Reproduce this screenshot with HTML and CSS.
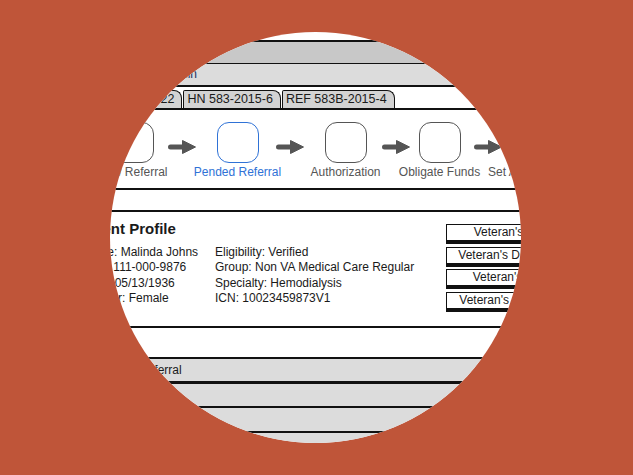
FILE: index.html
```html
<!DOCTYPE html>
<html lang="en">
<head>
<meta charset="utf-8">
<title>Referral wireframe</title>
<link rel="stylesheet" href="styles.css">
</head>
<body>
<div class="stage">
  <div class="lens">
    <div class="screen">
      <div class="masthead"></div>
      <div class="band band-dark"></div>
      <div class="band band-user"><span class="user">Welcome, Admin</span></div>
      <div class="tabs">
        <div class="tab">CR 583-2015-22</div>
        <div class="tab">HN 583-2015-6</div>
        <div class="tab">REF 583B-2015-4</div>
      </div>
      <div class="flow">
        <div class="step"><div class="box"></div><div class="label">New Referral</div></div>
        <div class="arrow"><svg width="28" height="16" viewBox="0 0 28 16"><path d="M2.5 8H17" stroke="#555" stroke-width="5" stroke-linecap="round"/><path d="M14.5 1.5L27.5 8L14.5 14.5Z" fill="#555" stroke="#555" stroke-width="1" stroke-linejoin="round"/></svg></div>
        <div class="step step-active"><div class="box"></div><div class="label">Pended Referral</div></div>
        <div class="arrow"><svg width="28" height="16" viewBox="0 0 28 16"><path d="M2.5 8H17" stroke="#555" stroke-width="5" stroke-linecap="round"/><path d="M14.5 1.5L27.5 8L14.5 14.5Z" fill="#555" stroke="#555" stroke-width="1" stroke-linejoin="round"/></svg></div>
        <div class="step"><div class="box"></div><div class="label">Authorization</div></div>
        <div class="arrow"><svg width="28" height="16" viewBox="0 0 28 16"><path d="M2.5 8H17" stroke="#555" stroke-width="5" stroke-linecap="round"/><path d="M14.5 1.5L27.5 8L14.5 14.5Z" fill="#555" stroke="#555" stroke-width="1" stroke-linejoin="round"/></svg></div>
        <div class="step"><div class="box"></div><div class="label">Obligate Funds</div></div>
        <div class="arrow"><svg width="28" height="16" viewBox="0 0 28 16"><path d="M2.5 8H17" stroke="#555" stroke-width="5" stroke-linecap="round"/><path d="M14.5 1.5L27.5 8L14.5 14.5Z" fill="#555" stroke="#555" stroke-width="1" stroke-linejoin="round"/></svg></div>
        <div class="step"><div class="box"></div><div class="label">Set Appointment</div></div>
      </div>
      <div class="spacer"></div>
      <div class="profile">
        <div class="profile-info">
          <div class="profile-title">Patient Profile</div>
          <div class="profile-grid">
            <div>Name: Malinda Johns</div><div>Eligibility: Verified</div>
            <div>SSN: 111-000-9876</div><div>Group: Non VA Medical Care Regular</div>
            <div>DOB: 05/13/1936</div><div>Specialty: Hemodialysis</div>
            <div>Gender: Female</div><div>ICN: 10023459873V1</div>
          </div>
        </div>
        <div class="profile-actions">
          <div class="btn">Veteran's Eligibility</div>
          <div class="btn">Veteran's Demographics</div>
          <div class="btn">Veteran's Referrals</div>
          <div class="btn">Veteran's Authorizations</div>
        </div>
      </div>
      <div class="blank"></div>
      <div class="band band-section band-first"><span class="section-title">Referral</span></div>
      <div class="band band-section"></div>
      <div class="band band-section band-tall"></div>
      <div class="band band-section band-last"></div>
    </div>
  </div>
</div>
</body>
</html>
```
FILE: styles.css
```css
* { box-sizing: border-box; }
html, body { margin: 0; }
body {
  background: #bf5539;
  width: 633px;
  height: 475px;
  overflow: hidden;
  font-family: "Liberation Sans", Arial, sans-serif;
}
.stage { padding: 32px 0 0 110px; }
.lens {
  width: 411px;
  height: 411px;
  border-radius: 50%;
  overflow: hidden;
  background: #fff;
}
.screen {
  width: 560px;
  margin-left: -40px;
  color: #1a1a1a;
  font-size: 12px;
}
.masthead { height: 10px; border-bottom: 2px solid #111; }
.band { background: #dcdcdc; border-bottom: 2px solid #111; }
.band-dark { height: 22px; background: #c8c8c8; border-bottom-width: 1px; }
.band-user { height: 23px; }
.user {
  display: inline-block;
  width: 127px;
  text-align: right;
  line-height: 21px;
  color: #22305e;
}
.tabs {
  height: 23px;
  display: flex;
  align-items: flex-end;
  gap: 1px;
  padding-left: 8px;
  border-bottom: 2px solid #111;
}
.tab {
  height: 18px;
  padding: 0 7px 0 3px;
  background: #d3d3d3;
  border: 1.5px solid #111;
  border-bottom: 0;
  border-radius: 2px 8px 0 0;
  font-size: 12.5px;
  line-height: 17px;
  white-space: nowrap;
}
.flow {
  height: 80px;
  display: grid;
  grid-template-columns: 45px 53px 59px 45px 67px 33px 55px 42px 46px;
  align-items: start;
  padding: 12px 0 0 40px;
  border-bottom: 2px solid #111;
}
.step {
  display: flex;
  flex-direction: column;
  align-items: center;
}
.box {
  width: 42px;
  height: 41px;
  border: 1.6px solid #555;
  border-radius: 12px;
}
.label {
  margin-top: 2px;
  line-height: 14px;
  white-space: nowrap;
  color: #555;
}
.step-active .box { border-color: #2f72d6; }
.step-active .label { color: #2f72d6; }
.arrow {
  justify-self: center;
  margin-top: 17px;
  height: 16px;
}
.arrow svg { display: block; }
.spacer { height: 22px; border-bottom: 2px solid #111; }
.profile {
  height: 116px;
  display: flex;
  align-items: flex-start;
  border-bottom: 2px solid #111;
}
.profile-info { width: 376px; flex: none; padding: 8px 0 0 12px; }
.profile-title {
  margin-left: -7px;
  font-size: 15px;
  font-weight: bold;
  line-height: 18px;
}
.profile-grid {
  margin-top: 7px;
  display: grid;
  grid-template-columns: 133px auto;
  line-height: 15.3px;
  white-space: nowrap;
}
.profile-actions {
  width: 157px;
  flex: none;
  padding-top: 12px;
  display: flex;
  flex-direction: column;
  gap: 2.7px;
}
.btn {
  height: 20px;
  border: 1.2px solid #111;
  border-bottom: 4px solid #111;
  border-right: 3px solid #111;
  text-align: center;
  font-size: 12px;
  line-height: 15px;
  white-space: nowrap;
}
.blank { height: 31px; border-bottom: 2px solid #111; }
.band-section { height: 24px; }
.band-first { height: 25px; border-bottom-width: 3px; }
.band-tall { height: 25px; }
.band-last { height: 40px; }
.section-title {
  display: inline-block;
  padding-left: 69px;
  line-height: 22px;
}
```
